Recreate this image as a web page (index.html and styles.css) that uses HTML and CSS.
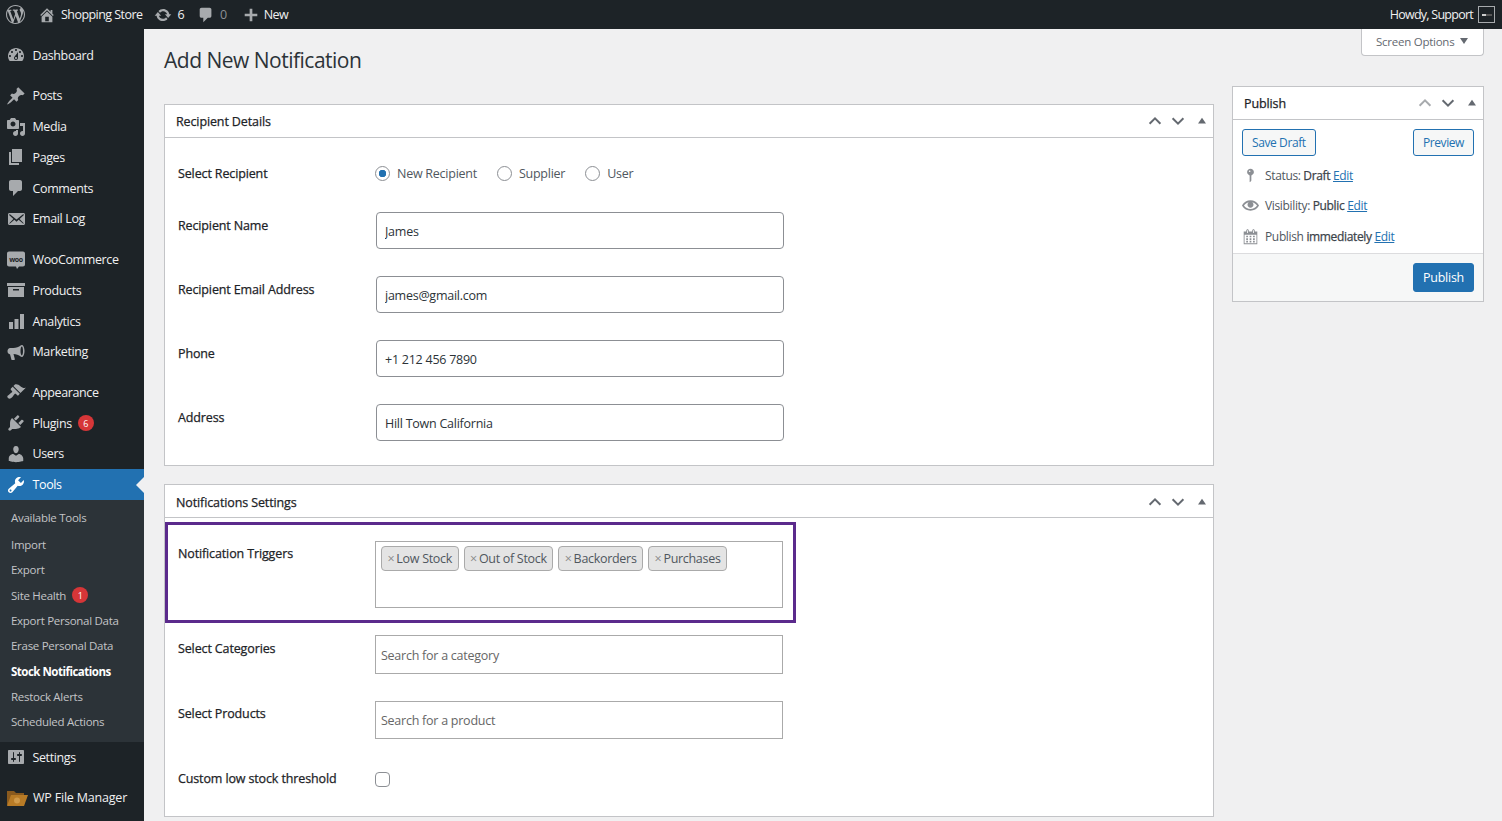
FILE: index.html
```html
<!DOCTYPE html>
<html lang="en">
<head>
<meta charset="UTF-8">
<meta name="viewport" content="width=device-width, initial-scale=1.0">
<title>Add New Notification</title>
<link rel="stylesheet" href="styles.css">
</head>
<body>
<svg class="sprite" xmlns="http://www.w3.org/2000/svg">
    <symbol id="i-wp" viewBox="0 0 20 20"><path d="M20 10c0-5.51-4.49-10-10-10C4.48 0 0 4.49 0 10c0 5.52 4.48 10 10 10 5.51 0 10-4.48 10-10zM7.78 15.37L4.37 6.22c.55-.02 1.17-.08 1.17-.08.5-.06.44-1.13-.06-1.11 0 0-1.45.11-2.37.11-.18 0-.37 0-.58-.01C4.12 2.69 6.87 1.11 10 1.11c2.33 0 4.45.87 6.05 2.34-.68-.11-1.65.39-1.65 1.58 0 .74.45 1.36.9 2.1.35.61.55 1.36.55 2.46 0 1.49-1.4 5-1.4 5l-3.03-8.37c.54-.02.82-.17.82-.17.5-.05.44-1.25-.06-1.22 0 0-1.44.12-2.38.12-.87 0-2.33-.12-2.33-.12-.5-.03-.56 1.2-.06 1.22l.92.08 1.26 3.41zM17.41 10c.24-.64.74-1.87.43-4.25.7 1.29 1.05 2.71 1.05 4.25 0 3.29-1.73 6.24-4.4 7.78.97-2.59 1.94-5.2 2.92-7.78zM6.1 18.09C3.12 16.65 1.11 13.53 1.11 10c0-1.3.23-2.48.72-3.59C3.25 10.3 4.67 14.2 6.1 18.09zm4.03-6.63l2.58 6.98c-.86.29-1.76.45-2.71.45-.79 0-1.57-.11-2.29-.33.81-2.38 1.62-4.74 2.42-7.1z"/></symbol>
    <symbol id="i-home" viewBox="0 0 20 20"><path d="M16 8.5l1.53 1.53-1.06 1.06L10 4.62l-6.47 6.47-1.06-1.06L10 2.5l4 4v-2h2v4zm-6-2.46l6 5.99V18H4v-5.97zM12 17v-5H8v5h4z"/></symbol>
    <symbol id="i-updates" viewBox="0 0 20 20"><path d="M10.2 3.28c3.53 0 6.43 2.61 6.92 6h2.08l-3.5 4-3.5-4h2.32c-.45-1.97-2.21-3.45-4.32-3.45-1.45 0-2.73.71-3.54 1.78L4.95 5.66C6.23 4.2 8.11 3.28 10.2 3.28zm-.4 13.44c-3.52 0-6.43-2.61-6.92-6H.8l3.5-4c1.17 1.33 2.33 2.67 3.5 4H5.48c.45 1.97 2.21 3.45 4.32 3.45 1.45 0 2.73-.71 3.54-1.78l1.71 1.95c-1.28 1.46-3.15 2.38-5.25 2.38z"/></symbol>
    <symbol id="i-comment" viewBox="0 0 20 20"><path d="M5 2h9c1.1 0 2 .9 2 2v7c0 1.1-.9 2-2 2h-2l-5 5v-5H5c-1.1 0-2-.9-2-2V4c0-1.1.9-2 2-2z"/></symbol>
    <symbol id="i-plus" viewBox="0 0 20 20"><path d="M17 8.5v3h-5.5V17h-3v-5.5H3v-3h5.5V3h3v5.5H17z"/></symbol>
    <symbol id="i-dashboard" viewBox="0 0 20 20"><path d="M3.76 16h12.48c1.1-1.37 1.76-3.11 1.76-5 0-4.42-3.58-8-8-8s-8 3.58-8 8c0 1.89.66 3.63 1.76 5zM10 4c.55 0 1 .45 1 1s-.45 1-1 1-1-.45-1-1 .45-1 1-1zM6 6c.55 0 1 .45 1 1s-.45 1-1 1-1-.45-1-1 .45-1 1-1zm8 0c.55 0 1 .45 1 1s-.45 1-1 1-1-.45-1-1 .45-1 1-1zm-5.37 5.55L12 7v6c0 1.1-.9 2-2 2s-2-.9-2-2c0-.57.24-1.08.63-1.45zM4 10c.55 0 1 .45 1 1s-.45 1-1 1-1-.45-1-1 .45-1 1-1zm12 0c.55 0 1 .45 1 1s-.45 1-1 1-1-.45-1-1 .45-1 1-1zm-5 3c0-.55-.45-1-1-1s-1 .45-1 1 .45 1 1 1 1-.45 1-1z"/></symbol>
    <symbol id="i-post" viewBox="0 0 20 20"><path d="M10.44 3.02l1.82-1.82 6.36 6.35-1.83 1.82c-1.05-.68-2.48-.57-3.41.36l-.75.75c-.92.93-1.04 2.35-.35 3.41l-1.83 1.82-2.41-2.41-2.8 2.79c-.42.42-3.38 2.71-3.8 2.29s1.86-3.39 2.28-3.81l2.79-2.79L4.1 9.36l1.83-1.82c1.05.69 2.48.57 3.4-.36l.75-.75c.93-.92 1.05-2.35.36-3.41z"/></symbol>
    <symbol id="i-media" viewBox="0 0 20 20"><path d="M13 11V4c0-.55-.45-1-1-1h-1.67L9 1H5L3.67 3H2c-.55 0-1 .45-1 1v7c0 .55.45 1 1 1h10c.55 0 1-.45 1-1zM7 4.5c1.38 0 2.5 1.12 2.5 2.5S8.38 9.5 7 9.5 4.5 8.38 4.5 7 5.62 4.5 7 4.5zM14 6h5v10.5c0 1.38-1.12 2.5-2.5 2.5S14 17.88 14 16.5s1.12-2.5 2.5-2.5c.17 0 .34.02.5.05V9h-3V6zm-4 8.05V13h2v3.5c0 1.38-1.12 2.5-2.5 2.5S7 17.88 7 16.5 8.12 14 9.5 14c.17 0 .34.02.5.05z"/></symbol>
    <symbol id="i-page" viewBox="0 0 20 20"><path d="M6 15V2h10v13H6zm-1 1h8v2H3V5h2v11z"/></symbol>
    <symbol id="i-mail" viewBox="0 0 20 20"><path d="M19 14.5v-9c0-.83-.67-1.5-1.5-1.5H3.49c-.83 0-1.5.67-1.5 1.5v9c0 .83.67 1.5 1.5 1.5H17.5c.83 0 1.5-.67 1.5-1.5zm-1.31-9.11c.33.33.15.67-.03.84L13.6 9.95l3.9 4.06c.12.14.2.36.06.51-.13.16-.43.15-.56.05l-4.37-3.73-2.14 1.95-2.13-1.95-4.37 3.73c-.13.1-.43.11-.56-.05-.14-.15-.06-.37.06-.51l3.9-4.06-4.06-3.72c-.18-.17-.36-.51-.03-.84s.67-.17.95.07l6.24 5.04 6.25-5.04c.28-.24.62-.4.95-.07z"/></symbol>
    <symbol id="i-archive" viewBox="0 0 20 20"><path fill-rule="evenodd" d="M1 3h18v3H1V3zm1 4h16v10H2V7zm5 2v1.500h6V9H7z"/></symbol>
    <symbol id="i-chart" viewBox="0 0 20 20"><path d="M3 11h4v7H3zM8.500 8h4v10h-4zM14 3h4v15h-4z"/></symbol>
    <symbol id="i-megaphone" viewBox="0 0 20 20"><path fill-rule="evenodd" d="M18.500 9c0 3.300-1.200 6-2.700 6-.4 0-.8-.2-1.200-.5C13 13 10 12 7.500 12L8.800 17c.1.500-.2 1-.8 1H6.200c-.4 0-.7-.2-.8-.6L4 12.300C2.500 12.100 1.500 10.800 1.500 9.200S2.600 6.200 4.200 6h3.300c2.500 0 5.500-1 7.100-2.500.4-.3.800-.5 1.200-.5 1.500 0 2.700 2.700 2.700 6zm-2.700 4.400c.7 0 1.200-2 1.200-4.400s-.5-4.400-1.200-4.400-1.300 2-1.300 4.400.6 4.400 1.300 4.400z"/></symbol>
    <symbol id="i-brush" viewBox="0 0 20 20"><path d="M14.480 11.060L7.410 3.990l1.500-1.500c.5-.56 2.300-.47 3.510.32 1.210.8 1.430 1.280 2.910 2.100 1.180.64 2.450 1.260 4.450.85zm-.71.71L6.700 4.700 4.930 6.470c-.39.39-.39 1.020 0 1.410l1.060 1.060c.39.39.39 1.030 0 1.420-.6.6-1.430 1.110-2.210 1.690-.35.26-.7.53-1.010.84C1.430 13.230.65 14.570 2 16s2.770.65 4.120-.68c.31-.31.58-.66.84-1.010.58-.78 1.090-1.610 1.690-2.210.39-.39 1.030-.39 1.420 0l1.060 1.060c.39.39 1.020.39 1.410 0z"/></symbol>
    <symbol id="i-plugin" viewBox="0 0 20 20"><path d="M13.110 4.360L9.870 7.600 8 5.730l3.240-3.240c.35-.34 1.050-.2 1.560.32.52.51.66 1.210.31 1.550zm-8 1.770l.91-1.120 9.010 9.010-1.190.84c-.71.71-2.630 1.160-3.820 1.160H6.140L4.900 17.260c-.59.59-1.540.59-2.120 0-.59-.58-.59-1.530 0-2.120l1.240-1.240v-3.880c0-1.130.4-3.190 1.090-3.890zm7.260 3.970l3.240-3.240c.34-.35 1.040-.21 1.550.31.52.51.66 1.210.31 1.550l-3.240 3.250z"/></symbol>
    <symbol id="i-users" viewBox="0 0 20 20"><path d="M10 9.250c-2.270 0-2.730-3.440-2.730-3.440C7 4.020 7.820 2 9.970 2c2.160 0 2.980 2.020 2.710 3.810 0 0-.41 3.440-2.680 3.440zm0 2.570L12.720 10c2.390 0 4.520 2.330 4.520 4.530v2.490s-3.650 1.130-7.240 1.130c-3.650 0-7.240-1.130-7.240-1.130v-2.490c0-2.250 1.940-4.480 4.470-4.480z"/></symbol>
    <symbol id="i-tools" viewBox="0 0 20 20"><path d="M16.680 9.770c-1.340 1.340-3.300 1.670-4.950.99l-5.410 6.520c-.99.99-2.590.99-3.580 0s-.99-2.590 0-3.570l6.520-5.420c-.68-1.650-.35-3.61.99-4.950 1.280-1.280 3.120-1.620 4.720-1.060l-2.890 2.890 2.820 2.820 2.860-2.870c.53 1.580.18 3.390-1.080 4.650zM3.810 16.210c.4.39 1.040.39 1.430 0 .4-.4.4-1.040 0-1.430-.39-.4-1.030-.4-1.430 0-.39.39-.39 1.030 0 1.430z"/></symbol>
    <symbol id="i-settings" viewBox="0 0 20 20"><path d="M18 16V4c0-.55-.45-1-1-1H3c-.55 0-1 .45-1 1v12c0 .55.45 1 1 1h14c.55 0 1-.45 1-1zM8 11h1c.55 0 1 .45 1 1s-.45 1-1 1H8v1.500c0 .28-.22.5-.5.5s-.5-.22-.5-.5V13H6c-.55 0-1-.45-1-1s.45-1 1-1h1V5.500c0-.28.22-.5.5-.5s.5.22.5.5V11zm5-2h-1c-.55 0-1-.45-1-1s.45-1 1-1h1V5.500c0-.28.22-.5.5-.5s.5.22.5.5V7h1c.55 0 1 .45 1 1s-.45 1-1 1h-1v5.500c0 .28-.22.5-.5.5s-.5-.22-.5-.5V9z"/></symbol>
    <symbol id="i-status" viewBox="0 0 20 20"><path d="M14 6c0 1.860-1.280 3.410-3 3.860V16c0 1-2 2-2 2V9.860c-1.720-.45-3-2-3-3.860 0-2.210 1.790-4 4-4s4 1.790 4 4zM8 5c0 .55.45 1 1 1s1-.45 1-1-.45-1-1-1-1 .45-1 1z"/></symbol>
    <symbol id="i-eye" viewBox="0 0 20 20"><path d="M19.700 9.400C17.700 6 14 3.900 10 3.900S2.300 6 .3 9.400L0 10l.3.6c2 3.400 5.700 5.500 9.700 5.500s7.700-2.100 9.700-5.500l.3-.6-.3-.6zM10 14.100c-3.100 0-6-1.600-7.700-4.100C3.600 8 5.700 6.600 8 6.100c-.9.6-1.500 1.700-1.500 2.900 0 1.900 1.600 3.500 3.500 3.500s3.500-1.600 3.500-3.500c0-1.200-.6-2.300-1.500-2.900 2.300.5 4.400 1.900 5.700 3.900-1.700 2.500-4.600 4.100-7.700 4.100z"/></symbol>
    <symbol id="i-calendar" viewBox="0 0 20 20"><path d="M15 4h3v15H2V4h3V3c0-.41.15-.76.44-1.060.29-.29.65-.44 1.060-.44s.77.15 1.060.44c.29.3.44.65.44 1.060v1h4V3c0-.41.15-.76.44-1.060.29-.29.65-.44 1.060-.44s.77.15 1.060.44c.29.3.44.65.44 1.060v1zM6 3v2.500c0 .14.05.26.15.36.09.09.21.14.35.14s.26-.05.35-.14c.1-.1.15-.22.15-.36V3c0-.14-.05-.26-.15-.35-.09-.1-.21-.15-.35-.15s-.26.05-.35.15c-.1.09-.15.21-.15.35zm7 0v2.500c0 .14.05.26.14.36.1.09.22.14.36.14s.26-.05.36-.14c.09-.1.14-.22.14-.36V3c0-.14-.05-.26-.14-.35-.1-.1-.22-.15-.36-.15s-.26.05-.36.15c-.09.09-.14.21-.14.35zm4 15V8H3v10h14zM7 9v2H5V9h2zm2 0h2v2H9V9zm4 2V9h2v2h-2zm-6 1v2H5v-2h2zm2 0h2v2H9v-2zm4 2v-2h2v2h-2zm-6 1v2H5v-2h2zm4 2H9v-2h2v2zm4 0h-2v-2h2v2z"/></symbol>
    <symbol id="i-up" viewBox="0 0 20 20"><path d="M4 13l6-6 6 6" fill="none" stroke="currentColor" stroke-width="2.200"/></symbol>
    <symbol id="i-down" viewBox="0 0 20 20"><path d="M4 7l6 6 6-6" fill="none" stroke="currentColor" stroke-width="2.200"/></symbol>
    <symbol id="i-tri" viewBox="0 0 20 20"><path d="M10 6l5 7H5z"/></symbol>
</svg>

<header class="adminbar">
    <svg class="bar-logo"><use href="#i-wp"/></svg>
    <svg class="bar-icon bar-home"><use href="#i-home"/></svg>
    <span class="bar-site">Shopping Store</span>
    <svg class="bar-icon bar-updates"><use href="#i-updates"/></svg>
    <span class="bar-count">6</span>
    <svg class="bar-icon bar-comment"><use href="#i-comment"/></svg>
    <span class="bar-count bar-zero">0</span>
    <svg class="bar-icon bar-plus"><use href="#i-plus"/></svg>
    <span class="bar-new">New</span>
    <span class="bar-howdy">Howdy, Support</span>
    <span class="bar-avatar"><span></span></span>
</header>

<div class="layout">
    <nav class="sidebar">
        <a class="menu-item"><svg><use href="#i-dashboard"/></svg>Dashboard</a>
        <div class="menu-sep"></div>
        <a class="menu-item"><svg><use href="#i-post"/></svg>Posts</a>
        <a class="menu-item"><svg><use href="#i-media"/></svg>Media</a>
        <a class="menu-item"><svg><use href="#i-page"/></svg>Pages</a>
        <a class="menu-item"><svg><use href="#i-comment"/></svg>Comments</a>
        <a class="menu-item"><svg><use href="#i-mail"/></svg>Email Log</a>
        <div class="menu-sep"></div>
        <a class="menu-item"><svg viewBox="0 0 20 20"><path d="M3 1.500h14c1.100 0 2 .9 2 2v11c0 1.100-.9 2-2 2h-4l-2 2.500-1-2.500H3c-1.100 0-2-.9-2-2v-11c0-1.100.9-2 2-2z"/><text class="woo-text" x="10" y="11.500" text-anchor="middle">woo</text></svg>WooCommerce</a>
        <a class="menu-item"><svg><use href="#i-archive"/></svg>Products</a>
        <a class="menu-item"><svg><use href="#i-chart"/></svg>Analytics</a>
        <a class="menu-item"><svg><use href="#i-megaphone"/></svg>Marketing</a>
        <div class="menu-sep"></div>
        <a class="menu-item"><svg><use href="#i-brush"/></svg>Appearance</a>
        <a class="menu-item"><svg><use href="#i-plugin"/></svg>Plugins<span class="badge">6</span></a>
        <a class="menu-item"><svg><use href="#i-users"/></svg>Users</a>
        <a class="menu-item active"><svg><use href="#i-tools"/></svg>Tools</a>
        <div class="submenu">
            <a class="sub-first">Available Tools</a>
            <a>Import</a>
            <a>Export</a>
            <a>Site Health<span class="badge">1</span></a>
            <a>Export Personal Data</a>
            <a>Erase Personal Data</a>
            <a class="current">Stock Notifications</a>
            <a>Restock Alerts</a>
            <a>Scheduled Actions</a>
        </div>
        <a class="menu-item"><svg><use href="#i-settings"/></svg>Settings</a>
        <div class="menu-sep"></div>
        <a class="menu-item menu-folder">
            <svg viewBox="0 0 22 18"><path class="folder-back" d="M1 2h7l2 2h8v12H1z"/><path class="folder-front" d="M5 6h17l-4 11H1z"/><circle class="folder-mark" cx="11" cy="11.500" r="3"/></svg>
            WP File Manager
        </a>
    </nav>

    <main class="content">
        <div class="top-row">
            <h1>Add New Notification</h1>
            <button class="screen-options">Screen Options<span class="caret"></span></button>
        </div>
        <div class="columns">
            <div class="col-main">
                <section class="postbox">
                    <div class="postbox-head">
                        <h2>Recipient Details</h2>
                        <div class="handles">
                            <svg><use href="#i-up"/></svg>
                            <svg><use href="#i-down"/></svg>
                            <svg class="tri"><use href="#i-tri"/></svg>
                        </div>
                    </div>
                    <div class="recipient-body">
                        <div class="form-row radio-row">
                            <label class="field-label">Select Recipient</label>
                            <div class="radios">
                                <label><input type="radio" name="recipient" checked>New Recipient</label>
                                <label><input type="radio" name="recipient">Supplier</label>
                                <label><input type="radio" name="recipient">User</label>
                            </div>
                        </div>
                        <div class="form-row">
                            <label class="field-label">Recipient Name</label>
                            <input class="text-input" type="text" value="James">
                        </div>
                        <div class="form-row">
                            <label class="field-label">Recipient Email Address</label>
                            <input class="text-input" type="text" value="james@gmail.com">
                        </div>
                        <div class="form-row">
                            <label class="field-label">Phone</label>
                            <input class="text-input" type="text" value="+1 212 456 7890">
                        </div>
                        <div class="form-row">
                            <label class="field-label">Address</label>
                            <input class="text-input" type="text" value="Hill Town California">
                        </div>
                    </div>
                </section>

                <section class="postbox settings-box">
                    <div class="postbox-head">
                        <h2>Notifications Settings</h2>
                        <div class="handles">
                            <svg><use href="#i-up"/></svg>
                            <svg><use href="#i-down"/></svg>
                            <svg class="tri"><use href="#i-tri"/></svg>
                        </div>
                    </div>
                    <div class="highlight">
                        <label class="field-label">Notification Triggers</label>
                        <div class="tag-box">
                            <span class="tag"><i>×</i>Low Stock</span>
                            <span class="tag"><i>×</i>Out of Stock</span>
                            <span class="tag"><i>×</i>Backorders</span>
                            <span class="tag"><i>×</i>Purchases</span>
                        </div>
                    </div>
                    <div class="settings-row cat-row">
                        <label class="field-label">Select Categories</label>
                        <input class="search-input" type="text" placeholder="Search for a category">
                    </div>
                    <div class="settings-row prod-row">
                        <label class="field-label">Select Products</label>
                        <input class="search-input" type="text" placeholder="Search for a product">
                    </div>
                    <div class="settings-row check-row">
                        <label class="field-label">Custom low stock threshold</label>
                        <input class="check" type="checkbox">
                    </div>
                </section>
            </div>

            <aside class="col-side">
                <section class="postbox">
                    <div class="postbox-head">
                        <h2>Publish</h2>
                        <div class="handles">
                            <svg class="faded"><use href="#i-up"/></svg>
                            <svg><use href="#i-down"/></svg>
                            <svg class="tri"><use href="#i-tri"/></svg>
                        </div>
                    </div>
                    <div class="pub-actions">
                        <button class="btn-outline">Save Draft</button>
                        <button class="btn-outline">Preview</button>
                    </div>
                    <div class="pub-misc"><svg><use href="#i-status"/></svg><span>Status: <b>Draft</b> <a>Edit</a></span></div>
                    <div class="pub-misc"><svg><use href="#i-eye"/></svg><span>Visibility: <b>Public</b> <a>Edit</a></span></div>
                    <div class="pub-misc"><svg><use href="#i-calendar"/></svg><span>Publish <b>immediately</b> <a>Edit</a></span></div>
                    <div class="pub-footer">
                        <button class="btn-primary">Publish</button>
                    </div>
                </section>
            </aside>
        </div>
    </main>
</div>
</body>
</html>
```

FILE: styles.css
```css
html, body {
    margin: 0;
    height: 821px;
    overflow: hidden;
}

body {
    background-color: #f0f0f1;
    color: #3c434a;
    font-family: "Open Sans", "Noto Sans", sans-serif;
    font-size: 12.5px;
    letter-spacing: -0.25px;
}

.sprite {
    display: none;
}

/* top bar */
.adminbar {
    display: flex;
    align-items: center;
    height: 29px;
    background-color: #1d2327;
    color: #f0f0f1;
    padding: 0 7px 0 6px;
    letter-spacing: -0.55px;
}

.adminbar svg {
    fill: #a7aaad;
    flex: none;
}

.bar-logo {
    width: 19px;
    height: 19px;
}

.bar-icon {
    width: 18px;
    height: 18px;
}

.bar-home {
    margin-left: 13px;
}

.bar-site {
    margin-left: 5px;
}

.bar-updates {
    margin-left: 12px;
}

.bar-count {
    margin-left: 5px;
}

.bar-comment {
    margin-left: 13px;
}

.bar-zero {
    margin-left: 5px;
    color: #8c8f94;
}

.bar-plus {
    margin-left: 15px;
}

.bar-new {
    margin-left: 4px;
}

.bar-howdy {
    margin-left: auto;
    letter-spacing: -0.75px;
}

.bar-avatar {
    display: flex;
    align-items: center;
    justify-content: center;
    width: 15px;
    height: 15px;
    margin-left: 5px;
    border: 1px solid #a7aaad;
    background-color: #1d2327;
}

.bar-avatar span {
    width: 10px;
    height: 2px;
    background: linear-gradient(90deg, #ccc 40%, #555 40%);
}

.layout {
    display: flex;
    height: 792px;
}

/* left menu */
.sidebar {
    flex: none;
    width: 144px;
    padding-top: 10.9px;
    background-color: #1d2327;
    color: #f0f0f1;
    letter-spacing: -0.38px;
}

.menu-item {
    position: relative;
    display: flex;
    align-items: center;
    height: 30.72px;
    padding-left: 6px;
}

.menu-item svg {
    flex: none;
    width: 20px;
    height: 20px;
    margin-right: 6.500px;
    fill: #a7aaad;
}

.woo-text {
    font-size: 7px;
    font-weight: 700;
    fill: #1d2327;
}

.menu-sep {
    height: 10px;
}

.menu-item.active {
    background-color: #2271b1;
    color: #fff;
}

.menu-item.active svg {
    fill: #fff;
}

.menu-item.active::after {
    content: "";
    position: absolute;
    right: 0;
    top: 8px;
    border: 8px solid transparent;
    border-left: 0;
    border-right-color: #f0f0f1;
}

.badge {
    display: inline-flex;
    align-items: center;
    justify-content: center;
    width: 16px;
    height: 16px;
    margin-left: 6px;
    border-radius: 50%;
    background-color: #d63638;
    color: #fff;
    font-size: 9px;
}

.submenu {
    background-color: #2c3338;
    color: #c3c4c7;
    font-size: 11.500px;
    letter-spacing: -0.28px;
    padding: 5.300px 0 7.300px;
}

.submenu a {
    display: flex;
    align-items: center;
    height: 25.300px;
    padding-left: 11px;
}

.submenu .sub-first {
    margin-bottom: 1.500px;
}

.submenu .current {
    color: #fff;
    font-weight: 700;
    letter-spacing: -0.5px;
}

.menu-folder {
    letter-spacing: -0.2px;
}

.menu-folder svg {
    width: 22px;
    height: 18px;
    margin-right: 5px;
}

.folder-back {
    fill: #8a5a1e;
}

.folder-front {
    fill: #b87b26;
}

.folder-mark {
    fill: #d09a4a;
}

/* content */
.content {
    flex: 1;
    padding: 0 18px 0 20px;
}

.top-row {
    display: flex;
    justify-content: space-between;
    align-items: flex-start;
    height: 57px;
}

h1 {
    margin: 16px 0 0;
    color: #2c3338;
    font-size: 21px;
    font-weight: 400;
    line-height: 30px;
    letter-spacing: -0.5px;
}

.screen-options {
    display: flex;
    align-items: center;
    height: 27px;
    width: 123px;
    padding: 0 0 2px 14px;
    border: 1px solid #c3c4c7;
    border-top: 0;
    border-radius: 0 0 4px 4px;
    background-color: #fff;
    color: #646970;
    font: inherit;
    font-size: 11.500px;
    letter-spacing: -0.25px;
}

.caret {
    margin-left: 6px;
    border: 4px solid transparent;
    border-top: 6px solid #646970;
    border-bottom: 0;
}

.columns {
    display: flex;
    align-items: flex-start;
    gap: 18px;
}

.col-main {
    flex: none;
    width: 1050px;
    margin-top: 18px;
}

.col-side {
    flex: none;
    width: 252px;
}

.postbox {
    border: 1px solid #c3c4c7;
    background-color: #fff;
}

.postbox-head {
    box-sizing: border-box;
    display: flex;
    align-items: center;
    justify-content: space-between;
    height: 33px;
    padding: 0 3px 0 11px;
    border-bottom: 1px solid #c3c4c7;
}

.settings-box .postbox-head {
    padding-top: 2px;
}

.postbox-head h2 {
    margin: 0;
    color: #1d2327;
    font-size: 12.500px;
    font-weight: 400;
    letter-spacing: -0.12px;
    -webkit-text-stroke: 0.25px #1d2327;
}

.handles {
    display: flex;
    align-items: center;
    gap: 5px;
}

.handles svg {
    width: 18px;
    height: 18px;
    fill: #646970;
    color: #646970;
}

.handles .faded {
    color: #a7aaad;
}

.handles .tri {
    width: 16px;
    height: 16px;
    margin-left: 2px;
}

/* Open Sans has no medium weight here, a thin stroke stands in for it */
.field-label {
    color: #1d2327;
    line-height: 20px;
    letter-spacing: -0.13px;
    -webkit-text-stroke: 0.25px #1d2327;
}

/* recipient form */
.recipient-body {
    padding: 22px 0 24px 13px;
}

.form-row {
    display: grid;
    grid-template-columns: 198px 408px;
    margin-bottom: 27px;
}

.form-row:last-child {
    margin-bottom: 0;
}

.form-row .field-label {
    padding-top: 4px;
}

.radio-row {
    height: 26px;
    margin-bottom: 26px;
    align-items: center;
}

.radio-row .field-label {
    padding-top: 1px;
}

.radios {
    display: flex;
    gap: 20px;
    margin-left: -1px;
}

.radios label {
    display: flex;
    align-items: center;
    color: #50575e;
}

.radios input {
    appearance: none;
    width: 15px;
    height: 15px;
    margin: 0 7px 0 0;
    border: 1px solid #8c8f94;
    border-radius: 50%;
    background-color: #fff;
}

.radios input:checked {
    background: radial-gradient(circle, #2271b1 0 3.500px, #fff 4px);
}

.text-input {
    box-sizing: border-box;
    width: 408px;
    height: 37px;
    padding: 2px 8px 0;
    border: 1px solid #8c8f94;
    border-radius: 4px;
    background-color: #fff;
    color: #2c3338;
    font: inherit;
    letter-spacing: inherit;
}

/* settings form */
.settings-box {
    margin-top: 18px;
}

.highlight {
    box-sizing: border-box;
    display: grid;
    grid-template-columns: 197px 408px;
    width: 631px;
    height: 101px;
    margin-top: 4px;
    padding: 16px 0 0 10px;
    border: 3px solid #5b2a8c;
}

.highlight .field-label {
    padding-top: 3px;
}

.tag-box {
    box-sizing: border-box;
    display: flex;
    align-items: flex-start;
    gap: 5px;
    height: 67px;
    padding: 4px 5px;
    border: 1px solid #aaa;
}

.tag {
    box-sizing: border-box;
    display: flex;
    align-items: center;
    height: 25px;
    padding: 0 5.5px;
    border: 1px solid #aaa;
    border-radius: 4px;
    background-color: #e4e4e4;
    color: #50575e;
    letter-spacing: -0.3px;
}

.tag i {
    margin-right: 2px;
    color: #888;
    font-style: normal;
}

.settings-row {
    display: grid;
    grid-template-columns: 197px 408px;
    padding-left: 13px;
}

.cat-row {
    margin-top: 12px;
}

.prod-row {
    margin-top: 27px;
}

.check-row {
    margin-top: 29px;
    height: 48px;
}

.settings-row .field-label {
    padding-top: 4px;
}

.prod-row .field-label {
    padding-top: 3px;
}

.check-row .field-label {
    padding-top: 1px;
}

.search-input {
    box-sizing: border-box;
    width: 408px;
    height: 39px;
    padding: 1px 5px 0;
    border: 1px solid #aaa;
    background-color: #fff;
    font: inherit;
    letter-spacing: inherit;
}

.prod-row .search-input {
    height: 38px;
}

.search-input::placeholder {
    color: #666;
    opacity: 1;
}

.check {
    appearance: none;
    box-sizing: border-box;
    width: 15px;
    height: 15px;
    margin: 4px 0 0;
    border: 1px solid #8c8f94;
    border-radius: 4px;
    background-color: #fff;
}

/* publish box */
.pub-actions {
    display: flex;
    justify-content: space-between;
    padding: 9px 9px 0;
    margin-bottom: 4px;
}

.btn-outline {
    height: 27px;
    padding: 0 9px;
    border: 1px solid #2271b1;
    border-radius: 3px;
    background-color: #f6f7f7;
    color: #2271b1;
    font: inherit;
    font-size: 12px;
    letter-spacing: -0.4px;
}

.pub-misc {
    display: flex;
    align-items: center;
    height: 30.500px;
    padding-left: 9px;
    color: #50575e;
    font-size: 12px;
    letter-spacing: -0.35px;
}

.pub-misc svg {
    flex: none;
    width: 17px;
    height: 17px;
    margin-right: 6px;
    fill: #8c8f94;
}

.pub-misc b {
    color: #3c434a;
    font-weight: 400;
    -webkit-text-stroke: 0.25px #3c434a;
}

.pub-misc a {
    color: #2271b1;
    text-decoration: underline;
}

.pub-footer {
    display: flex;
    justify-content: flex-end;
    margin-top: 1px;
    padding: 9px 9px 9px;
    border-top: 1px solid #dcdcde;
    background-color: #f6f7f7;
}

.btn-primary {
    width: 61px;
    height: 29px;
    padding: 0;
    border: 1px solid #2271b1;
    border-radius: 3px;
    background-color: #2271b1;
    color: #fff;
    font: inherit;
    letter-spacing: inherit;
}
```
